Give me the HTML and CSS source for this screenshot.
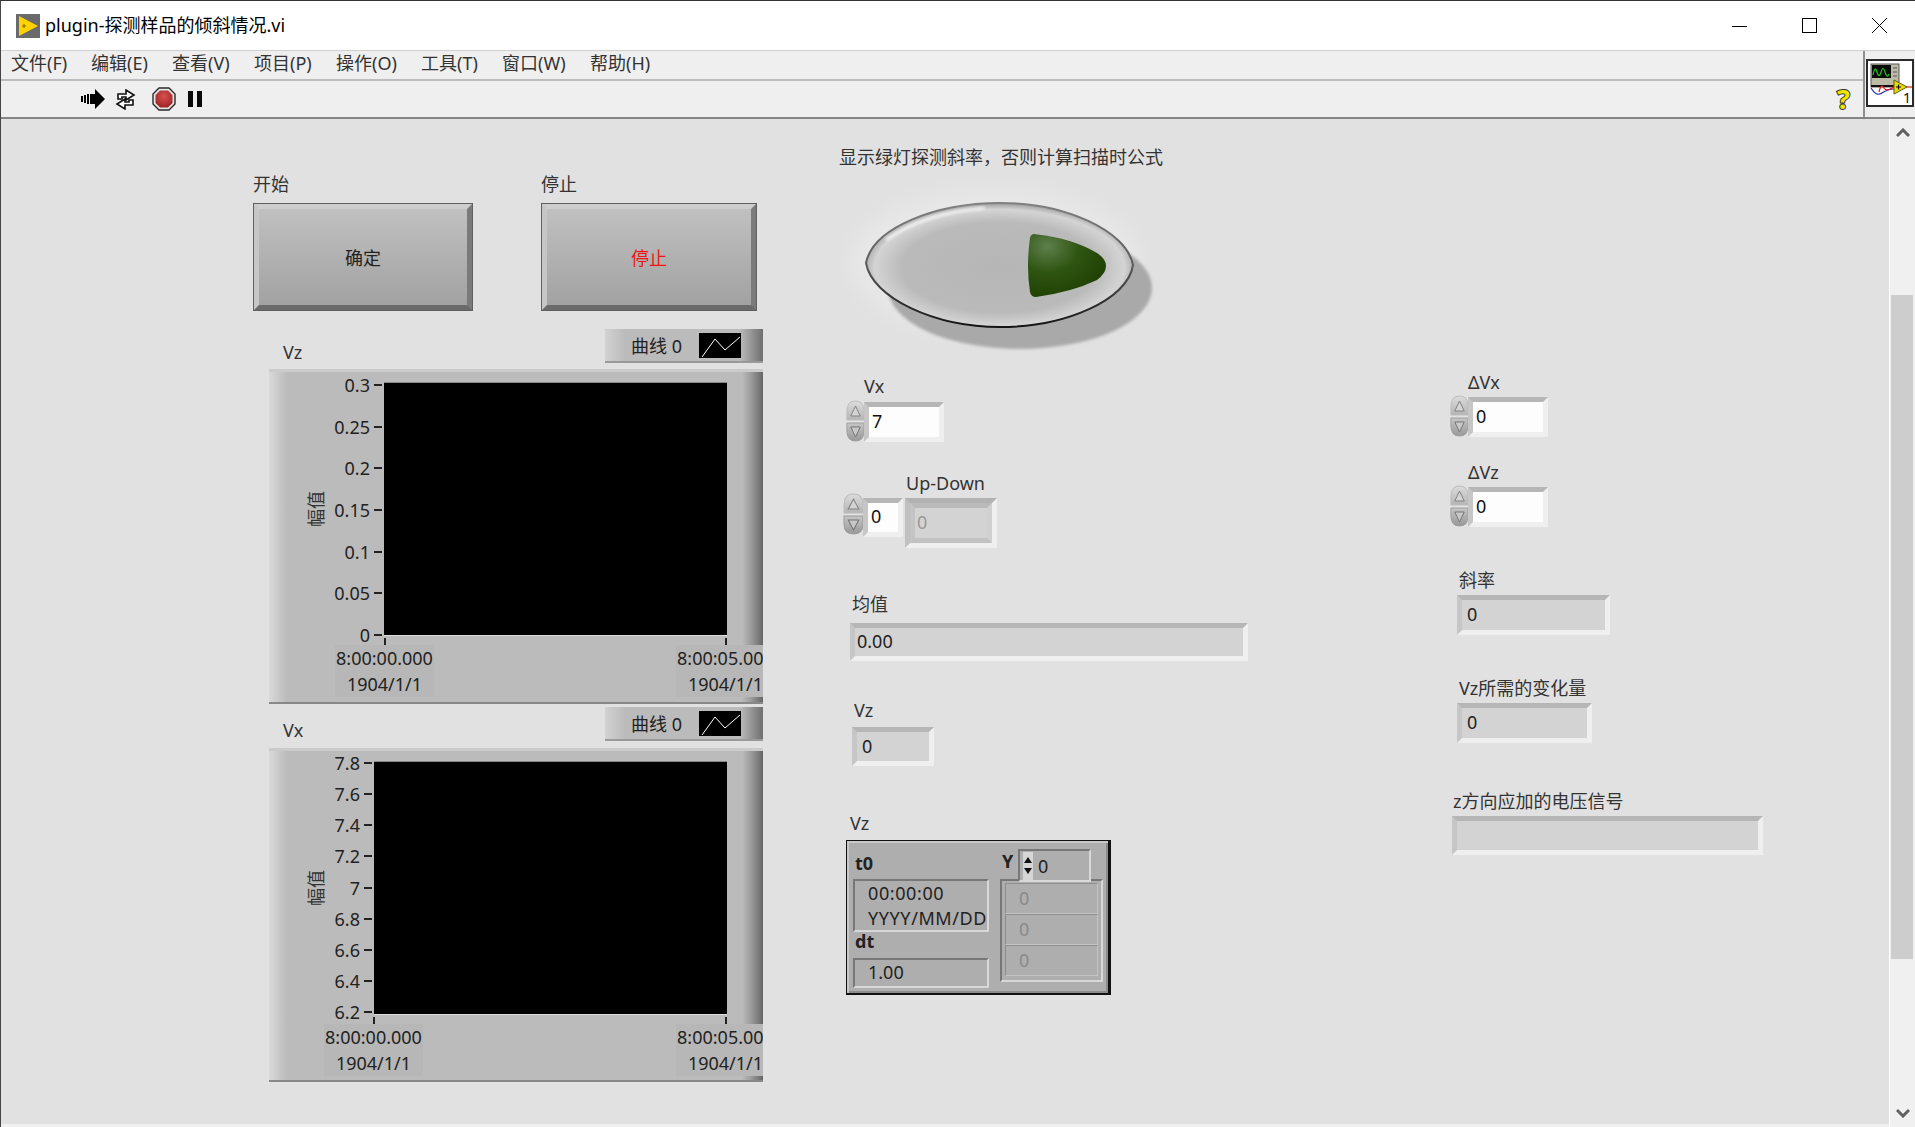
FILE: index.html
```html
<!DOCTYPE html>
<html lang="zh-CN">
<head>
    <meta charset="UTF-8">
    <title>plugin-探测样品的倾斜情况.vi</title>
    <link rel="stylesheet" href="styles.css">
</head>
<body>

    <svg class="defs" width="0" height="0">
        <defs>
            <linearGradient id="spinUp" x1="0" y1="0" x2="0" y2="1">
                <stop offset="0" stop-color="#dcdcdc"/>
                <stop offset="1" stop-color="#b4b4b4"/>
            </linearGradient>
            <linearGradient id="spinDown" x1="0" y1="0" x2="0" y2="1">
                <stop offset="0" stop-color="#c6c6c6"/>
                <stop offset="1" stop-color="#989898"/>
            </linearGradient>
            <symbol id="spinner" viewBox="0 0 20 42" preserveAspectRatio="none">
                <path d="M1 20V11Q1 1 10 1T19 11V20Z" fill="url(#spinUp)" stroke="#bcbcbc"/>
                <path d="M1 23V31Q1 41 10 41T19 31V23Z" fill="url(#spinDown)" stroke="#9c9c9c"/>
                <path d="M5 16L10 6L15 16Z" fill="#d4d4d4" stroke="#808080"/>
                <path d="M5 27L10 37L15 27Z" fill="#c8c8c8" stroke="#747474"/>
            </symbol>
        </defs>
    </svg>

    <div class="window">
        <div class="titlebar">
            <svg class="app-icon" viewBox="0 0 24 24">
                <rect width="24" height="24" fill="#6a6a6a"/>
                <path d="M3 2L22 12L3 22Z" fill="#ffd200"/>
                <path d="M6 12H10M8 10V14" stroke="#8a6d00" stroke-width="1.2"/>
            </svg>
            <span class="title">plugin-探测样品的倾斜情况.vi</span>
            <div class="win-btns">
                <div class="win-btn"><svg width="16" height="16"><path d="M0 8.500H15" stroke="#000"/></svg></div>
                <div class="win-btn"><svg width="16" height="16"><rect x="0.5" y="0.5" width="14" height="14" fill="none" stroke="#000"/></svg></div>
                <div class="win-btn"><svg width="16" height="16"><path d="M0 0L15 15M15 0L0 15" stroke="#000"/></svg></div>
            </div>
        </div>

        <div class="bars">
            <div class="bars-left">
                <div class="menubar">
                    <span class="menu-item m1">文件(F)</span>
                    <span class="menu-item m2">编辑(E)</span>
                    <span class="menu-item m3">查看(V)</span>
                    <span class="menu-item m4">项目(P)</span>
                    <span class="menu-item m5">操作(O)</span>
                    <span class="menu-item m6">工具(T)</span>
                    <span class="menu-item m7">窗口(W)</span>
                    <span class="menu-item m8">帮助(H)</span>
                </div>
                <div class="toolbar">
                    <svg class="tool run" width="24" height="20" viewBox="0 0 24 20">
                        <path d="M0 7H2V13H0ZM3 6H5V14H3ZM6 5H8V15H6ZM9 5H14V0L24 10L14 20V15H9Z" fill="#000"/>
                    </svg>
                    <svg class="tool cont" width="25" height="21" viewBox="0 0 25 21">
                        <path d="M5 10V5H13V1L21 6L13 11V8H9V10Z" fill="#fff" stroke="#111" stroke-width="1.6"/>
                        <path d="M20 11V16H12V20L4 15L12 10V13H16V11Z" fill="#fff" stroke="#111" stroke-width="1.6"/>
                    </svg>
                    <svg class="tool abort" width="24" height="24" viewBox="0 0 24 24">
                        <defs>
                            <radialGradient id="abortRed" cx="0.5" cy="0.35" r="0.65">
                                <stop offset="0" stop-color="#d85050"/>
                                <stop offset="1" stop-color="#a02525"/>
                            </radialGradient>
                        </defs>
                        <path d="M7 1H17L23 7V17L17 23H7L1 17V7Z" fill="#e6e6e6" stroke="#2a2a2a" stroke-width="1.4"/>
                        <path d="M8 3.500H16L20.500 8V16L16 20.500H8L3.500 16V8Z" fill="url(#abortRed)"/>
                    </svg>
                    <div class="tool pause"><i></i><i></i></div>
                    <span class="help">?</span>
                </div>
            </div>
            <div class="icon-pane">
                <svg class="vi-icon" viewBox="0 0 48 48">
                    <rect x="1" y="1" width="46" height="46" fill="#fff" stroke="#2b2b2b" stroke-width="2"/>
                    <rect x="5" y="5" width="28" height="23" fill="#bcbca6" stroke="#555"/>
                    <rect x="6" y="6" width="19" height="13" fill="#0b0b0b"/>
                    <path d="M7 16Q9 6 11 13T15 13T19 13T23 15" fill="none" stroke="#19c419" stroke-width="1.2"/>
                    <path d="M27 9H31M27 13H31M27 17H31" stroke="#777" stroke-width="1.5"/>
                    <path d="M5 27H28" stroke="#111" stroke-width="2"/>
                    <path d="M5 29Q10 38 16 34T28 30" fill="none" stroke="#1f2fb0" stroke-width="1.2"/>
                    <path d="M13 33Q15 24 18 29T30 26" fill="none" stroke="#e21b1b" stroke-width="1.2"/>
                    <path d="M40 28H46" stroke="#e21b1b" stroke-width="1.2"/>
                    <path d="M28 21L41 28L28 35Z" fill="#ecdc00" stroke="#5a5a00"/>
                    <path d="M30 28H35M32.500 25.500V30.500" stroke="#111" stroke-width="1.2"/>
                    <text class="vi-num" x="37" y="44">1</text>
                </svg>
            </div>
        </div>

        <div class="main">
            <div class="panel">
                <span class="lbl lbl-start">开始</span>
                <button class="lv-btn btn-start">确定</button>
                <span class="lbl lbl-stop">停止</span>
                <button class="lv-btn btn-stop">停止</button>

                <span class="lbl lbl-chart-z">Vz</span>
                <div class="legend legend-z">
                    <span>曲线 0</span>
                    <svg class="swatch" viewBox="0 0 42 25"><path d="M3 24L16 6L26 17L41 4" fill="none" stroke="#fff"/></svg>
                </div>
                <div class="chart chart-z">
                    <div class="chart-body">
                        <div class="axis-name"><span>幅值</span></div>
                        <div class="y-axis">
                            <div class="y-tick">0.3</div>
                            <div class="y-tick">0.25</div>
                            <div class="y-tick">0.2</div>
                            <div class="y-tick">0.15</div>
                            <div class="y-tick">0.1</div>
                            <div class="y-tick">0.05</div>
                            <div class="y-tick">0</div>
                        </div>
                        <div class="plot"></div>
                    </div>
                    <div class="x-axis">
                        <div class="x-group"><i class="x-tick"></i><div class="x-label">8:00:00.000<br>1904/1/1</div></div>
                        <div class="x-group"><i class="x-tick"></i><div class="x-label">8:00:05.000<br>1904/1/1</div></div>
                    </div>
                </div>

                <span class="lbl lbl-chart-x">Vx</span>
                <div class="legend legend-x">
                    <span>曲线 0</span>
                    <svg class="swatch" viewBox="0 0 42 25"><path d="M3 24L16 6L26 17L41 4" fill="none" stroke="#fff"/></svg>
                </div>
                <div class="chart chart-x">
                    <div class="chart-body">
                        <div class="axis-name"><span>幅值</span></div>
                        <div class="y-axis">
                            <div class="y-tick">7.8</div>
                            <div class="y-tick">7.6</div>
                            <div class="y-tick">7.4</div>
                            <div class="y-tick">7.2</div>
                            <div class="y-tick">7</div>
                            <div class="y-tick">6.8</div>
                            <div class="y-tick">6.6</div>
                            <div class="y-tick">6.4</div>
                            <div class="y-tick">6.2</div>
                        </div>
                        <div class="plot"></div>
                    </div>
                    <div class="x-axis">
                        <div class="x-group"><i class="x-tick"></i><div class="x-label">8:00:00.000<br>1904/1/1</div></div>
                        <div class="x-group"><i class="x-tick"></i><div class="x-label">8:00:05.000<br>1904/1/1</div></div>
                    </div>
                </div>

                <span class="lbl lbl-led">显示绿灯探测斜率&#xFF0C;否则计算扫描时公式</span>
                <svg class="led" viewBox="840 175 330 190">
                    <defs>
                        <radialGradient id="ledFace" cx="0.5" cy="0.52" r="0.52">
                            <stop offset="0" stop-color="#b6b6b6"/>
                            <stop offset="0.7" stop-color="#bababa"/>
                            <stop offset="0.9" stop-color="#d4d4d4"/>
                            <stop offset="1" stop-color="#9c9c9c"/>
                        </radialGradient>
                        <linearGradient id="ledRim" x1="0" y1="0" x2="0" y2="1">
                            <stop offset="0" stop-color="#808080"/>
                            <stop offset="0.5" stop-color="#5a5a5a"/>
                            <stop offset="1" stop-color="#141414"/>
                        </linearGradient>
                        <radialGradient id="ledGreen" cx="0.25" cy="0.2" r="0.9">
                            <stop offset="0" stop-color="#5d7f4c"/>
                            <stop offset="0.45" stop-color="#2f5512"/>
                            <stop offset="1" stop-color="#1d3d00"/>
                        </radialGradient>
                        <filter id="blurBig"><feGaussianBlur stdDeviation="9"/></filter>
                        <filter id="blurSmall"><feGaussianBlur stdDeviation="1.5"/></filter>
                    </defs>
                    <ellipse cx="995" cy="262" rx="146" ry="74" fill="#e7e7e7" filter="url(#blurBig)"/>
                    <ellipse cx="1020" cy="288" rx="132" ry="61" fill="#a9a9a9" filter="url(#blurSmall)"/>
                    <path d="M866 263C873 228 935 203 1000 203C1065 203 1126 230 1133 265C1128 300 1065 327 1000 327C935 327 872 298 866 263Z" fill="url(#ledFace)" stroke="url(#ledRim)" stroke-width="2"/>
                    <path d="M886 240Q925 212 985 208" fill="none" stroke="#f4f4f4" stroke-width="3" filter="url(#blurSmall)"/>
                    <path d="M1034 234Q1072 238 1097 253Q1106 259 1106 266Q1106 273 1097 280Q1072 292 1036 297Q1031 297 1030 292Q1026 266 1030 238Q1031 234 1034 234Z" fill="url(#ledGreen)"/>
                </svg>

                <span class="lbl lbl-vx">Vx</span>
                <div class="num-ctl ctl-vx">
                    <svg class="spin"><use href="#spinner"/></svg>
                    <div class="num-box">7</div>
                </div>

                <span class="lbl lbl-updown">Up-Down</span>
                <div class="num-ctl ctl-updown">
                    <svg class="spin"><use href="#spinner"/></svg>
                    <div class="num-box num-small">0</div>
                </div>
                <div class="ind-frame ind-updown"><div class="ind ind-disabled">0</div></div>

                <span class="lbl lbl-mean">均值</span>
                <div class="ind ind-mean">0.00</div>

                <span class="lbl lbl-vz">Vz</span>
                <div class="ind ind-vz">0</div>

                <span class="lbl lbl-wave">Vz</span>
                <div class="wave">
                    <div class="wave-left">
                        <b class="wave-name">t0</b>
                        <div class="wave-field wave-t0">00:00:00<br>YYYY/MM/DD</div>
                        <b class="wave-name wave-name-dt">dt</b>
                        <div class="wave-field wave-dt">1.00</div>
                    </div>
                    <div class="wave-right">
                        <div class="wave-head">
                            <b class="wave-y">Y</b>
                            <div class="wave-index">
                                <div class="mini-spin"><i class="tri-up"></i><i class="tri-down"></i></div>
                                <span>0</span>
                            </div>
                        </div>
                        <div class="wave-array">
                            <div class="wave-cell">0</div>
                            <div class="wave-cell">0</div>
                            <div class="wave-cell">0</div>
                        </div>
                    </div>
                </div>

                <span class="lbl lbl-dvx">ΔVx</span>
                <div class="num-ctl ctl-dvx">
                    <svg class="spin"><use href="#spinner"/></svg>
                    <div class="num-box">0</div>
                </div>

                <span class="lbl lbl-dvz">ΔVz</span>
                <div class="num-ctl ctl-dvz">
                    <svg class="spin"><use href="#spinner"/></svg>
                    <div class="num-box">0</div>
                </div>

                <span class="lbl lbl-slope">斜率</span>
                <div class="ind ind-slope">0</div>

                <span class="lbl lbl-change">Vz所需的变化量</span>
                <div class="ind ind-change">0</div>

                <span class="lbl lbl-signal">z方向应加的电压信号</span>
                <div class="ind ind-signal"></div>
            </div>

            <div class="scrollbar">
                <div class="scroll-arrow"><svg width="14" height="10"><path d="M1 8L7 2L13 8" fill="none" stroke="#606060" stroke-width="3"/></svg></div>
                <div class="scroll-track"><div class="scroll-thumb"></div></div>
                <div class="scroll-arrow"><svg width="14" height="10"><path d="M1 2L7 8L13 2" fill="none" stroke="#606060" stroke-width="3"/></svg></div>
            </div>
        </div>
    </div>

</body>
</html>
```

FILE: styles.css
```css
* {
    box-sizing: border-box;
}
html, body {
    margin: 0;
    height: 100%;
    overflow: hidden;
}
body {
    font-family: "Noto Sans", "Noto Sans CJK SC", sans-serif;
    font-size: 18px;
    color: #222;
    background: #fff;
}
.defs {
    display: block;
    height: 0;
}
.window {
    display: flex;
    flex-direction: column;
    height: 1127px;
    border-top: 1px solid #333;
    border-left: 1px solid #444;
}

/* title bar */
.titlebar {
    display: flex;
    align-items: center;
    height: 49px;
    padding-left: 15px;
    background: #fff;
}
.app-icon {
    width: 24px;
    height: 24px;
    margin-right: 5px;
}
.title {
    margin-bottom: 4px;
    font-size: 18px;
    color: #000;
}
.win-btns {
    display: flex;
    margin-left: auto;
}
.win-btn {
    display: flex;
    align-items: center;
    justify-content: center;
    width: 70px;
    height: 49px;
}

/* menu + toolbar */
.bars {
    display: flex;
    height: 69px;
    background: #efefef;
    border-bottom: 2px solid #858585;
    border-top: 1px solid #d0d0d0;
}
.bars-left {
    flex: 1;
    display: flex;
    flex-direction: column;
}
.menubar {
    display: flex;
    align-items: center;
    height: 30px;
    padding: 0 0 4px 10px;
    border-bottom: 2px solid #bdbdbd;
}
.menu-item {
    color: #333;
    line-height: 26px;
}
.m1 { width: 80px; }
.m2 { width: 81px; }
.m3 { width: 82px; }
.m4 { width: 82px; }
.m5 { width: 85px; }
.m6 { width: 81px; }
.m7 { width: 88px; }
.toolbar {
    flex: 1;
    display: flex;
    align-items: center;
    padding-left: 80px;
}
.tool {
    flex: none;
}
.cont { margin-left: 8px; }
.abort { margin-left: 14px; }
.pause {
    display: flex;
    gap: 4px;
    margin-left: 12px;
}
.pause i {
    width: 5px;
    height: 16px;
    background: #0a0a0a;
}
.help {
    margin-left: auto;
    margin-right: 13px;
    font-size: 27px;
    font-weight: 700;
    line-height: 30px;
    color: #efe600;
    -webkit-text-stroke: 2px #333;
    paint-order: stroke fill;
}
.icon-pane {
    width: 52px;
    padding: 8px 0 0 1px;
    border-left: 2px solid #8f8f8f;
}
.vi-icon {
    display: block;
    width: 48px;
    height: 48px;
}
.vi-num {
    font-size: 14px;
    fill: #111;
}

/* front panel, a free canvas: every control sits at its own place */
.main {
    flex: 1;
    display: flex;
    min-height: 0;
}
.panel {
    position: relative;
    flex: 1;
    background: #e1e1e1;
    border-bottom: 3px solid #f0f0f0;
}
.lbl {
    position: absolute;
    line-height: 24px;
    white-space: nowrap;
    color: #333;
}
.lbl-start { left: 252px; top: 53px; }
.lbl-stop { left: 540px; top: 53px; }
.lbl-chart-z { left: 282px; top: 221px; }
.lbl-chart-x { left: 282px; top: 599px; }
.lbl-led { left: 838px; top: 26px; }
.lbl-vx { left: 863px; top: 255px; }
.lbl-updown { left: 905px; top: 352px; }
.lbl-mean { left: 851px; top: 473px; }
.lbl-vz { left: 853px; top: 579px; }
.lbl-wave { left: 849px; top: 692px; }
.lbl-dvx { left: 1467px; top: 251px; }
.lbl-dvz { left: 1467px; top: 341px; }
.lbl-slope { left: 1458px; top: 449px; }
.lbl-change { left: 1458px; top: 557px; }
.lbl-signal { left: 1452px; top: 670px; }

/* buttons */
.lv-btn {
    position: absolute;
    top: 84px;
    height: 108px;
    font-family: inherit;
    font-size: 18px;
    color: #222;
    background: linear-gradient(#c0c0c0, #a2a2a2);
    border: 6px solid;
    border-color: #cdcdcd #7a7a7a #6a6a6a #c6c6c6;
    outline: 1px solid #5f5f5f;
    outline-offset: -1px;
}
.btn-start { left: 252px; width: 220px; }
.btn-stop { left: 540px; width: 216px; color: #f01414; }

/* charts */
.legend {
    position: absolute;
    left: 604px;
    width: 158px;
    height: 34px;
    display: flex;
    align-items: center;
    justify-content: flex-end;
    gap: 17px;
    padding-right: 22px;
    background: linear-gradient(90deg, #d2d2d2 0, #bbb 20px, #bbb 135px, #6f6f6f 100%);
    border-bottom: 2px solid #999;
}
.legend-z { top: 210px; }
.legend-x { top: 588px; }
.swatch {
    display: block;
    width: 42px;
    height: 25px;
    background: #000;
}
.chart {
    position: absolute;
    left: 268px;
    width: 494px;
    overflow: hidden;
    padding-top: 11px;
    background: linear-gradient(90deg, #d9d9d9 0, #bbb 18px, #bbb calc(100% - 21px), #9c9c9c calc(100% - 12px), #666 100%);
    border-top: 3px solid #cbcbcb;
    border-bottom: 2px solid #888;
}
.chart-z { top: 250px; height: 335px; }
.chart-x { top: 629px; height: 334px; }
.chart-body {
    display: flex;
    padding-right: 36px;
}
.axis-name {
    display: flex;
    align-items: center;
    justify-content: center;
    flex: none;
    width: 92px;
    height: 252px;
}
.axis-name span {
    transform: rotate(-90deg);
    white-space: nowrap;
    color: #333;
}
.y-axis {
    flex: 1;
    min-width: 0;
    display: flex;
    flex-direction: column;
    justify-content: space-between;
    height: 250px;
    margin-top: 2px;
    margin-right: 2px;
}
.chart-x .y-axis {
    height: 249px;
    margin-top: 1px;
}
.y-tick {
    display: flex;
    align-items: center;
    justify-content: flex-end;
    gap: 4px;
    height: 0;
    white-space: nowrap;
}
.y-tick::after {
    content: "";
    flex: none;
    width: 8px;
    height: 2px;
    background: #222;
}
.plot {
    flex: none;
    width: 343px;
    height: 252px;
    background: #000;
    box-shadow: 0 -1px 0 #888, 0 1px 0 #ddd;
}
.chart-x .plot {
    width: 353px;
}
.x-axis {
    display: flex;
    justify-content: space-between;
    padding-left: 66px;
    margin-right: -12px;
}
.chart-x .x-axis {
    padding-left: 55px;
}
.x-group {
    display: flex;
    flex-direction: column;
    align-items: center;
    width: 99px;
}
.x-tick {
    width: 2px;
    height: 7px;
    margin-top: 3px;
    background: #222;
}
.x-label {
    width: 99px;
    height: 52px;
    line-height: 26px;
    text-align: center;
    white-space: nowrap;
    background: #b7b7b7;
}

/* boolean led */
.led {
    position: absolute;
    left: 839px;
    top: 56px;
    width: 330px;
    height: 190px;
}

/* numeric controls */
.num-ctl {
    position: absolute;
    display: flex;
    align-items: flex-start;
}
.ctl-vx { left: 845px; top: 281px; }
.ctl-updown { left: 842px; top: 374px; }
.ctl-dvx { left: 1449px; top: 276px; }
.ctl-dvz { left: 1449px; top: 366px; }
.spin {
    flex: none;
    width: 19px;
    height: 42px;
    margin-right: -1px;
}
.ctl-updown .spin {
    width: 21px;
}
.num-box {
    display: flex;
    align-items: center;
    width: 80px;
    height: 40px;
    margin-top: 2px;
    padding: 0 0 3px 3px;
    color: #111;
    background: #fdfdfd;
    border: 5px solid;
    border-color: #b6b6b6 #efefef #efefef #c6c6c6;
}
.num-small {
    width: 40px;
    height: 39px;
    margin-top: 5px;
}
.ind {
    display: flex;
    align-items: center;
    padding: 0 0 2px 5px;
    color: #222;
    background: #d3d3d3;
    border: 5px solid;
    border-color: #b6b6b6 #efefef #efefef #c6c6c6;
}
.ind-mean {
    position: absolute;
    left: 849px;
    top: 504px;
    width: 398px;
    height: 38px;
    padding-left: 2px;
}
.ind-vz {
    position: absolute;
    left: 851px;
    top: 608px;
    width: 82px;
    height: 39px;
}
.ind-slope {
    position: absolute;
    left: 1456px;
    top: 476px;
    width: 153px;
    height: 40px;
}
.ind-change {
    position: absolute;
    left: 1456px;
    top: 584px;
    width: 135px;
    height: 40px;
}
.ind-signal {
    position: absolute;
    left: 1451px;
    top: 697px;
    width: 311px;
    height: 39px;
}
.ind-frame {
    position: absolute;
    left: 904px;
    top: 379px;
    width: 92px;
    height: 50px;
    background: #bdbdbd;
    border: 5px solid;
    border-color: #b2b2b2 #efefef #efefef #c0c0c0;
}
.ind-disabled {
    height: 100%;
    padding-left: 2px;
    color: #999;
    border-color: #bababa #d0d0d0 #c2c2c2 #c4c4c4;
}

/* waveform indicator */
.wave {
    position: absolute;
    left: 845px;
    top: 721px;
    width: 265px;
    height: 155px;
    display: flex;
    padding-left: 6px;
    color: #222;
    background: #aeaeae;
    border: 1px solid #111;
    border-right-width: 3px;
    border-bottom-width: 2px;
    box-shadow: inset 2px 2px 0 #c8c8c8, inset -2px -2px 0 #8c8c8c;
}
.wave-left {
    display: flex;
    flex-direction: column;
    width: 136px;
    margin-top: 11px;
}
.wave-name {
    line-height: 22px;
    padding-left: 2px;
}
.wave-name:first-child {
    margin-bottom: 5px;
}
.wave-name-dt {
    margin-top: -2px;
}
.wave-field {
    padding-left: 13px;
    white-space: nowrap;
    border: 2px solid;
    border-color: #777 #d8d8d8 #d8d8d8 #777;
    overflow: hidden;
}
.wave-t0 {
    height: 53px;
    line-height: 25px;
    letter-spacing: 0.6px;
}
.wave-dt {
    height: 30px;
    margin-top: 6px;
    line-height: 24px;
}
.wave-right {
    width: 103px;
    margin-left: 11px;
    margin-top: 8px;
}
.wave-head {
    display: flex;
    align-items: flex-start;
}
.wave-y {
    width: 18px;
    padding-left: 2px;
    line-height: 24px;
}
.wave-index {
    position: relative;
    z-index: 1;
    display: flex;
    align-items: center;
    gap: 5px;
    width: 73px;
    height: 33px;
    padding-left: 3px;
    background: #aeaeae;
    border: 2px solid;
    border-color: #777 #d8d8d8 #d8d8d8 #777;
}
.mini-spin {
    display: flex;
    flex-direction: column;
    justify-content: center;
    gap: 5px;
    width: 10px;
    height: 28px;
    background: #d6d6d6;
}
.tri-up, .tri-down {
    width: 0;
    height: 0;
    margin: 0 auto;
    border-left: 4px solid transparent;
    border-right: 4px solid transparent;
}
.tri-up { border-bottom: 6px solid #111; }
.tri-down { border-top: 6px solid #111; }
.wave-array {
    margin-top: -3px;
    padding: 2px 3px 4px;
    border: 2px solid;
    border-color: #777 #d8d8d8 #d8d8d8 #777;
}
.wave-cell {
    height: 31px;
    padding-left: 13px;
    line-height: 28px;
    color: #8a8a8a;
    border: 1px solid;
    border-color: #8e8e8e #c4c4c4 #c4c4c4 #8e8e8e;
}

/* scrollbar */
.scrollbar {
    flex: none;
    display: flex;
    flex-direction: column;
    width: 26px;
    background: #f0f0f0;
    border-left: 1px solid #fff;
}
.scroll-arrow {
    display: flex;
    align-items: center;
    justify-content: center;
    flex: none;
    height: 28px;
}
.scroll-track {
    flex: 1;
    padding: 148px 2px 0 1px;
}
.scroll-thumb {
    height: 664px;
    background: #cdcdcd;
}
```
